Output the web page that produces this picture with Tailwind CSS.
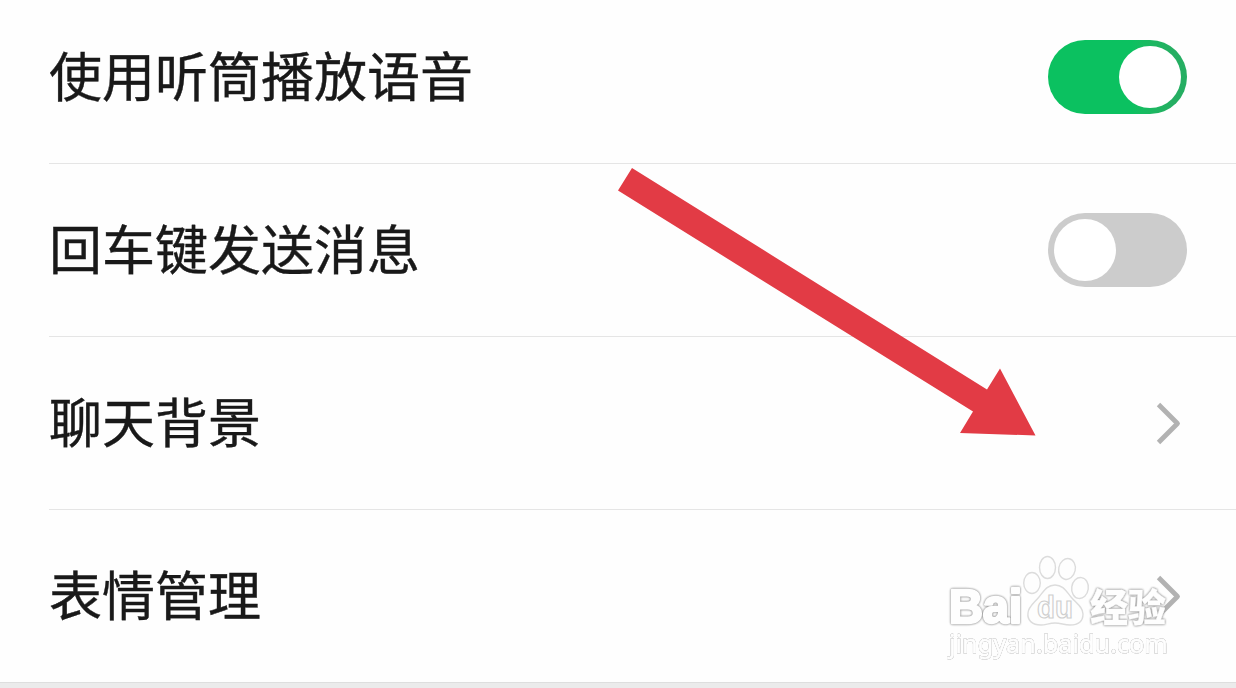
<!DOCTYPE html>
<html lang="zh-CN">
<head>
  <meta charset="UTF-8" />
  <meta name="viewport" content="width=device-width, initial-scale=1.0"/>
  <title>聊天</title>
  <script src="https://cdn.jsdelivr.net/npm/@tailwindcss/browser@4"></script>
  <style>
    body {
      font-family: 'Noto Sans CJK SC', sans-serif;
    }
  </style>
</head>
<body class="bg-[#ebebeb] h-screen overflow-hidden text-[53px] leading-none text-[#191919]">

  <div class="relative h-full overflow-hidden">

    <!-- Settings list -->
    <div class="-mt-[9px] bg-[#fefefe] pl-[49px] border-b border-[#dedede]">
      <div class="h-[173px] flex items-center justify-between pr-[49px] border-b border-[#e5e5e5]">
        <span class="pb-1.5 [-webkit-text-stroke:0.4px_#191919]">使用听筒播放语音</span>
        <button class="w-[139px] h-[74px] rounded-full bg-linear-to-r from-[#0bc160] from-60% to-[#25ae62] to-90% p-1.5 flex justify-end" aria-label="使用听筒播放语音">
          <span class="size-[62px] rounded-full bg-white"></span>
        </button>
      </div>

      <div class="h-[173px] flex items-center justify-between pr-[49px] border-b border-[#e5e5e5]">
        <span class="pb-1.5 [-webkit-text-stroke:0.4px_#191919]">回车键发送消息</span>
        <button class="w-[139px] h-[74px] rounded-full bg-[#cccccc] p-1.5 flex justify-start" aria-label="回车键发送消息">
          <span class="size-[62px] rounded-full bg-white"></span>
        </button>
      </div>

      <div class="h-[173px] flex items-center justify-between pr-[54px] border-b border-[#e5e5e5]">
        <span class="pb-1.5 [-webkit-text-stroke:0.4px_#191919]">聊天背景</span>
        <svg class="w-[26px] h-[44px]" viewBox="0 0 26 44" fill="none" stroke="#b2b2b2" stroke-width="4.8" stroke-linejoin="round">
          <path d="M2.500 3.500 L21.500 22.500 L2.500 41.500" />
        </svg>
      </div>

      <div class="h-[172px] flex items-center justify-between pr-[54px]">
        <span class="pb-1.5 [-webkit-text-stroke:0.4px_#191919]">表情管理</span>
        <svg class="w-[26px] h-[44px]" viewBox="0 0 26 44" fill="none" stroke="#b2b2b2" stroke-width="4.8" stroke-linejoin="round">
          <path d="M2.500 3.500 L21.500 22.500 L2.500 41.500" />
        </svg>
      </div>
    </div>

    <!-- Arrow -->
    <svg class="absolute left-[618px] top-[168px] w-[418px] h-[268px]" viewBox="618 168 418 268">
      <polygon points="632,168 987,389.500 1000,368.500 1035.500,435.500 960,433 973,411.500 618,190.500" fill="#e23b45" />
    </svg>

    <!-- Watermark -->
    <svg class="absolute left-[936px] top-[545px] w-[250px] h-[125px]" viewBox="0 0 250 125">
      <g fill="#fefefe" stroke="#dcdcdc" stroke-width="1.4">
        <ellipse cx="111.500" cy="22.500" rx="8" ry="11" />
        <ellipse cx="131" cy="24" rx="8.300" ry="10.500" transform="rotate(12 131 24)" />
        <ellipse cx="96" cy="38" rx="8.300" ry="10.500" />
        <ellipse cx="144" cy="43" rx="8.300" ry="10.500" transform="rotate(8 144 43)" />
        <path d="M119 40 C127 40 130 46 135 52 C140 58 147 62 147 69 C147 77 141 80 134 80 C128 80 125 78 119 78 C113 78 110 80 105 80 C96 80 91 75 92 68 C92 62 98 58 103 52 C108 46 111 40 119 40 Z" />
      </g>
      <!-- white letters, outlined by their shadow -->
      <g class="[filter:drop-shadow(0_0_0.8px_#8c8c8c)_drop-shadow(0_0_0.5px_#c4c4c4)]" fill="#fefefe" stroke="#fefefe" stroke-linejoin="round">
        <text x="13" y="77.500" stroke-width="2.6" font-family="Liberation Sans" font-weight="700" font-size="48" textLength="73" lengthAdjust="spacingAndGlyphs">Bai</text>
        <text x="154" y="75.500" stroke-width="0.4" font-family="Noto Sans CJK SC" font-weight="900" font-size="38" textLength="76">经验</text>
      </g>
      <g class="[filter:drop-shadow(0_0_0.7px_#a0a0a0)_drop-shadow(0_0_0.4px_#d0d0d0)]" fill="#fefefe" stroke="#fefefe" stroke-width="0.8">
        <text x="13" y="108" font-family="Noto Sans" font-size="25" textLength="219" lengthAdjust="spacingAndGlyphs">jingyan.baidu.com</text>
      </g>
      <text x="101" y="73" fill="#fefefe" stroke="#cfcfcf" stroke-width="1.2" font-family="Liberation Sans" font-size="31" textLength="36" lengthAdjust="spacingAndGlyphs" font-weight="700">du</text>
    </svg>

  </div>

</body>
</html>
